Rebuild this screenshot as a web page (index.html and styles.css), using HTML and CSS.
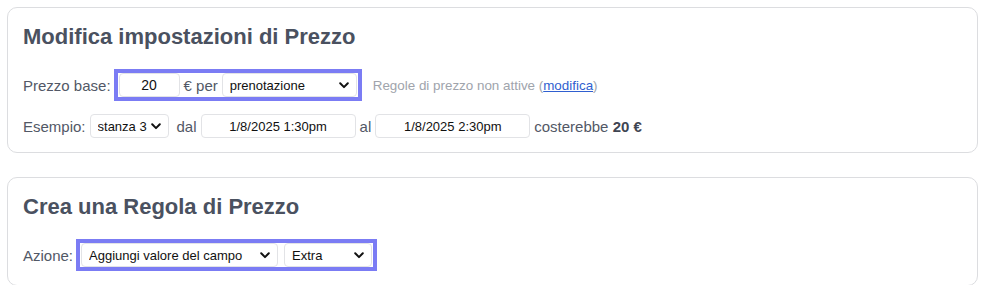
FILE: index.html
```html
<!DOCTYPE html>
<html lang="it">
<head>
  <meta charset="UTF-8">
  <title>Impostazioni di Prezzo</title>
  <link rel="stylesheet" href="styles.css">
</head>
<body>

  <!-- Impostazioni prezzo base -->
  <div class="card">
    <h2 class="card-title">Modifica impostazioni di Prezzo</h2>

    <div class="row row-main">
      <span class="label">Prezzo base:</span>
      <span class="highlight">
        <input class="field field-price" type="text" value="20">
        <span class="label">€ per</span>
        <select class="field field-select field-unit">
          <option>prenotazione</option>
        </select>
      </span>
      <span class="note">Regole di prezzo non attive (<a href="#">modifica</a>)</span>
    </div>

    <div class="row row-example">
      <span class="label">Esempio:</span>
      <select class="field field-select field-room">
        <option>stanza 3</option>
      </select>
      <span class="label">dal</span>
      <input class="field field-date" type="text" value="1/8/2025 1:30pm">
      <span class="label">al</span>
      <input class="field field-date" type="text" value="1/8/2025 2:30pm">
      <span class="label">costerebbe <b class="total">20 €</b></span>
    </div>
  </div>

  <!-- Nuova regola -->
  <div class="card">
    <h2 class="card-title">Crea una Regola di Prezzo</h2>

    <div class="row row-main">
      <span class="label">Azione:</span>
      <span class="highlight highlight-wide">
        <select class="field field-select field-action">
          <option>Aggiungi valore del campo</option>
        </select>
        <select class="field field-select field-extra">
          <option>Extra</option>
        </select>
      </span>
    </div>
  </div>

</body>
</html>
```

FILE: styles.css
```css
body {
  margin: 0;
  padding: 7px 6px 0 7px;
  font-family: 'Liberation Sans', Arial, sans-serif;
  color: #525866;
  background-color: #ffffff;
}

.card {
  border: 1px solid #dcdde0;
  border-radius: 10px;
  padding: 16px 15px 14px 15px;
  margin-bottom: 24px;
}

.card-title {
  margin: 0 0 19px 0;
  font-size: 22px;
  line-height: 26px;
  font-weight: bold;
  color: #4a5160;
}

.row {
  display: flex;
  align-items: center;
  font-size: 15px;
}

.row-main {
  height: 32px;
  gap: 3px;
}

.row-example {
  margin-top: 13px;
  height: 24px;
  gap: 4px;
}

.label {
  white-space: nowrap;
}

.total {
  color: #3f4552;
}

.highlight {
  display: flex;
  align-items: center;
  gap: 4px;
  height: 24px;
  padding: 0 1px;
  border: 4px solid #7b7cf4;
  background-color: #ffffff;
}

.highlight-wide {
  gap: 6px;
}

.field {
  box-sizing: border-box;
  height: 24px;
  margin: 0;
  border: 1px solid #e2e3e6;
  border-radius: 4px;
  background-color: #ffffff;
  font-family: 'Liberation Sans', Arial, sans-serif;
  font-size: 13px;
  color: #111111;
  outline: none;
}

.field-select {
  appearance: none;
  -webkit-appearance: none;
  padding: 0 20px 0 7px;
  background-image: url("data:image/svg+xml,%3Csvg xmlns='http://www.w3.org/2000/svg' width='10' height='7' viewBox='0 0 10 7'%3E%3Cpath d='M1.2 1.3 5 5.1 8.8 1.3' fill='none' stroke='%23111' stroke-width='2' stroke-linecap='round' stroke-linejoin='round'/%3E%3C/svg%3E");
  background-repeat: no-repeat;
  background-position: right 7px center;
  background-size: 10px 7px;
}

.field-price {
  width: 61px;
  text-align: center;
  font-size: 14px;
}

.field-unit {
  width: 135px;
}

.field-room {
  width: 79px;
  margin-right: 4px;
}

.field-date {
  width: 155px;
  text-align: center;
}

.field-action {
  width: 197px;
}

.field-extra {
  width: 88px;
}

.note {
  margin-left: 8px;
  font-size: 13.4px;
  color: #a0a4ac;
}

.note a {
  color: #2f5fd0;
}
```
